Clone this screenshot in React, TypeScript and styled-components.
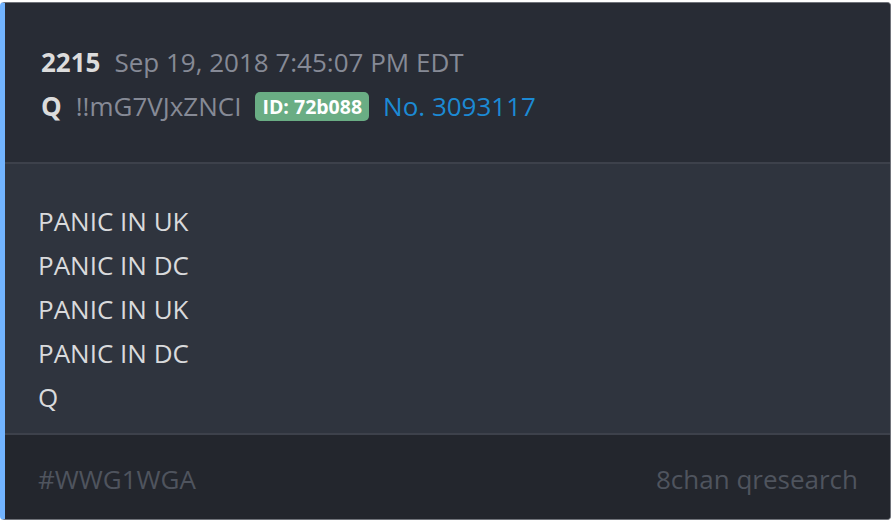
import React from 'react'
import styled, { createGlobalStyle } from 'styled-components'

const GlobalStyle = createGlobalStyle`
    html, body {
        margin: 0;
        padding: 0;
        background: #ffffff;
    }
    body {
        font-family: "Open Sans", "Noto Sans", sans-serif;
    }
`

// Styled Components
const Card = styled.article`
    display: flex;
    flex-direction: column;
    box-sizing: border-box;
    width: 891px;
    height: 518px;
    margin: 2px 3px 0 0;
    border: 1px solid #70737a;
    border-left: 5px solid #72b4ff;
    border-radius: 4px;
    overflow: hidden;
    background: #2f343e;
`

const Header = styled.header`
    display: flex;
    flex-direction: column;
    padding: 37px 0 34px 36px;
    background: #282c35;
    border-bottom: 2px solid #3d414b;
`

const Row = styled.div`
    display: flex;
    align-items: center;
    gap: 14px;
    height: 44px;
`

const Strong = styled.span`
    font-size: 26px;
    font-weight: 700;
    color: #dcdcdc;
`

const Muted = styled.span`
    font-size: 26px;
    color: #868a96;
`

const Badge = styled.span`
    display: inline-flex;
    align-items: center;
    height: 29px;
    padding: 0 7px;
    border-radius: 5px;
    background: #6aad84;
    color: #ffffff;
    font-size: 19.5px;
    font-weight: 700;
`

const PostLink = styled.a`
    font-size: 26px;
    color: #1c8ad4;
    text-decoration: none;
`

const Body = styled.section`
    flex: 1;
    padding: 35px 0 0 33px;
    border-bottom: 2px solid #3d414b;
`

const Line = styled.p`
    margin: 0;
    font-size: 26px;
    line-height: 44px;
    color: #d9dadc;
`

const Footer = styled.footer`
    display: flex;
    justify-content: space-between;
    align-items: center;
    height: 80px;
    padding: 4px 32px 0 33px;
    background: #23262d;
    font-size: 26px;
    color: #4f545e;
`

const lines = ['PANIC IN UK', 'PANIC IN DC', 'PANIC IN UK', 'PANIC IN DC', 'Q']

const App: React.FC = (): JSX.Element => {
    return (
        <>
            <GlobalStyle />
            <Card>
                <Header>
                    <Row>
                        <Strong>2215</Strong>
                        <Muted>Sep 19, 2018 7:45:07 PM EDT</Muted>
                    </Row>
                    <Row>
                        <Strong>Q</Strong>
                        <Muted>!!mG7VJxZNCI</Muted>
                        <Badge>ID: 72b088</Badge>
                        <PostLink href="#">No. 3093117</PostLink>
                    </Row>
                </Header>
                <Body>
                    {lines.map((text, i) => (
                        <Line key={i}>{text}</Line>
                    ))}
                </Body>
                <Footer>
                    <span>#WWG1WGA</span>
                    <span>8chan qresearch</span>
                </Footer>
            </Card>
        </>
    )
}

export default App
